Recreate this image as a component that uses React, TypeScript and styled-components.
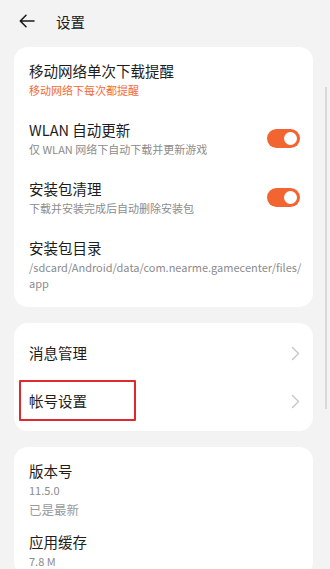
import React from 'react';
import styled, { createGlobalStyle } from 'styled-components';

const GlobalStyle = createGlobalStyle`
  html, body {
    margin: 0;
    padding: 0;
    background: #f3f3f3;
  }
  body {
    font-family: "Noto Sans CJK SC", "Noto Sans", sans-serif;
    -webkit-font-smoothing: antialiased;
  }
`;

type SettingItem = {
  title: string;
  lines?: string[];
  accent?: boolean;
  toggle?: boolean;
};

const downloadItems: SettingItem[] = [
  { title: '移动网络单次下载提醒', lines: ['移动网络下每次都提醒'], accent: true },
  { title: 'WLAN 自动更新', lines: ['仅 WLAN 网络下自动下载并更新游戏'], toggle: true },
  { title: '安装包清理', lines: ['下载并安装完成后自动删除安装包'], toggle: true },
  {
    title: '安装包目录',
    lines: ['/sdcard/Android/data/com.nearme.gamecenter/files/', 'app'],
  },
];

const Toggle: React.FC = () => (
  <StyledToggle>
    <span className="knob" />
  </StyledToggle>
);

const Chevron: React.FC = () => (
  <svg width="9" height="15" viewBox="0 0 9 15" fill="none">
    <polyline
      points="1.5,1.5 7.5,7.5 1.5,13.5"
      stroke="#c6c6c6"
      strokeWidth="1.4"
      strokeLinecap="round"
      strokeLinejoin="round"
    />
  </svg>
);

const BackArrow: React.FC = () => (
  <svg width="16" height="14" viewBox="0 0 16 14" fill="none">
    <path
      d="M15 7H1.5M7 1.3L1.3 7L7 12.7"
      stroke="#1b1b1b"
      strokeWidth="1.6"
      strokeLinecap="round"
      strokeLinejoin="round"
    />
  </svg>
);

const App: React.FC = () => {
  return (
    <Screen>
      <GlobalStyle />
      <Header>
        <BackArrow />
        <h1>设置</h1>
      </Header>

      <Card>
        {downloadItems.map((item) => (
          <Row key={item.title}>
            <RowText>
              <Title>{item.title}</Title>
              {item.lines?.map((line) => (
                <Sub key={line} $accent={item.accent}>
                  {line}
                </Sub>
              ))}
            </RowText>
            {item.toggle ? <Toggle /> : null}
          </Row>
        ))}
      </Card>

      <Card $compact>
        <NavRow>
          <Title>消息管理</Title>
          <Chevron />
        </NavRow>
        <NavRow>
          <Title>帐号设置</Title>
          <Chevron />
          <Highlight />
        </NavRow>
      </Card>

      <Card>
        <Row $tight>
          <RowText>
            <Title>版本号</Title>
            <Sub>11.5.0</Sub>
            <Status>已是最新</Status>
          </RowText>
        </Row>
        <Row $tight>
          <RowText>
            <Title>应用缓存</Title>
            <Sub>7.8 M</Sub>
          </RowText>
        </Row>
      </Card>

      <ScrollBar />
    </Screen>
  );
};

const Screen = styled.div`
  position: relative;
  width: 330px;
  height: 569px;
  overflow: hidden;
  background: #f3f3f3;
`;

const Header = styled.div`
  height: 42px;
  margin-bottom: 5px;
  padding-left: 19px;
  display: flex;
  align-items: center;

  h1 {
    margin: 0 0 0 21px;
    font-size: 14.5px;
    font-weight: 400;
    color: #1b1b1b;
  }
`;

const Card = styled.div<{ $compact?: boolean }>`
  margin: 0 17px 16px 14px;
  padding: ${(p) => (p.$compact ? '6px 0' : '5px 0 3px')};
  background: #ffffff;
  border-radius: 14px;
`;

const Row = styled.div<{ $tight?: boolean }>`
  display: flex;
  align-items: center;
  justify-content: space-between;
  padding: ${(p) => (p.$tight ? '9px 13px 4px 15px' : '9px 13px 13px 15px')};
`;

const RowText = styled.div`
  display: flex;
  flex-direction: column;
  min-width: 0;
`;

const Title = styled.div`
  font-size: 14.5px;
  line-height: 20px;
  color: #1d1d1d;
`;

const Sub = styled.div<{ $accent?: boolean }>`
  margin-top: 1px;
  font-size: 11px;
  line-height: 16px;
  color: ${(p) => (p.$accent ? '#f26a36' : '#8c8c8c')};
  & + & {
    margin-top: 0;
  }
`;

const Status = styled.div`
  margin-top: 2px;
  font-size: 12.5px;
  line-height: 19px;
  color: #9a9a9a;
`;

const NavRow = styled.div`
  position: relative;
  display: flex;
  align-items: center;
  justify-content: space-between;
  padding: 14px 13px 14px 15px;
`;

const Highlight = styled.span`
  position: absolute;
  left: 5px;
  top: 3px;
  width: 117px;
  height: 41px;
  box-sizing: border-box;
  border: 2px solid #e0292f;
  border-radius: 1px;
  pointer-events: none;
`;

const StyledToggle = styled.span`
  flex-shrink: 0;
  position: relative;
  width: 33px;
  height: 19px;
  border-radius: 10px;
  background: #f26530;

  .knob {
    position: absolute;
    top: 3px;
    right: 3.5px;
    width: 13px;
    height: 13px;
    border-radius: 50%;
    background: #ffffff;
  }
`;

const ScrollBar = styled.span`
  position: absolute;
  left: 325px;
  top: 87px;
  width: 1.5px;
  height: 322px;
  background: #d9d9d9;
`;

export default App;
